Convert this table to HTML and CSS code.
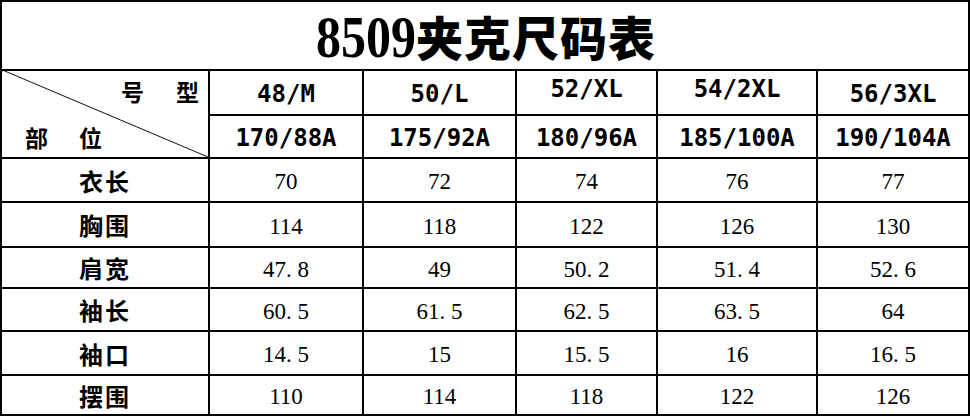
FILE: index.html
```html
<!DOCTYPE html>
<html lang="zh-CN">
<head>
<meta charset="utf-8">
<title>8509夹克尺码表</title>
<link rel="stylesheet" href="styles.css">
</head>
<body>
<div class="sheet">
  <div class="cell title"><span class="num">8509</span><span class="zh">夹克尺码表</span></div>

  <div class="cell corner">
    <svg class="diag" viewBox="0 0 100 100" preserveAspectRatio="none"><line x1="0" y1="0" x2="100" y2="100" stroke="#111" stroke-width="1" vector-effect="non-scaling-stroke"/></svg>
    <span class="mark"></span>
    <div class="corner-top"><span>号</span><span>型</span></div>
    <div class="corner-bottom"><span>部</span><span>位</span></div>
  </div>
  <div class="cell size">48/M</div>
  <div class="cell size">50/L</div>
  <div class="cell size up">52/XL</div>
  <div class="cell size up">54/2XL</div>
  <div class="cell size">56/3XL</div>
  <div class="cell size">170/88A</div>
  <div class="cell size">175/92A</div>
  <div class="cell size">180/96A</div>
  <div class="cell size">185/100A</div>
  <div class="cell size">190/104A</div>

  <div class="cell label">衣长</div>
  <div class="cell val">70</div>
  <div class="cell val">72</div>
  <div class="cell val">74</div>
  <div class="cell val">76</div>
  <div class="cell val">77</div>

  <div class="cell label">胸围</div>
  <div class="cell val">114</div>
  <div class="cell val">118</div>
  <div class="cell val">122</div>
  <div class="cell val">126</div>
  <div class="cell val">130</div>

  <div class="cell label">肩宽</div>
  <div class="cell val">47<span class="dot">.</span>8</div>
  <div class="cell val">49</div>
  <div class="cell val">50<span class="dot">.</span>2</div>
  <div class="cell val">51<span class="dot">.</span>4</div>
  <div class="cell val">52<span class="dot">.</span>6</div>

  <div class="cell label">袖长</div>
  <div class="cell val">60<span class="dot">.</span>5</div>
  <div class="cell val">61<span class="dot">.</span>5</div>
  <div class="cell val">62<span class="dot">.</span>5</div>
  <div class="cell val">63<span class="dot">.</span>5</div>
  <div class="cell val">64</div>

  <div class="cell label">袖口</div>
  <div class="cell val">14<span class="dot">.</span>5</div>
  <div class="cell val">15</div>
  <div class="cell val">15<span class="dot">.</span>5</div>
  <div class="cell val">16</div>
  <div class="cell val">16<span class="dot">.</span>5</div>

  <div class="cell label">摆围</div>
  <div class="cell val">110</div>
  <div class="cell val">114</div>
  <div class="cell val">118</div>
  <div class="cell val">122</div>
  <div class="cell val">126</div>
</div>
</body>
</html>
```

FILE: styles.css
```css
html, body {
  margin: 0;
  padding: 0;
  background: #fff;
}

.sheet {
  box-sizing: border-box;
  width: 970px;
  height: 416px;
  display: grid;
  grid-template-columns: 206px 152px 151px 139px 158px 150px;
  grid-template-rows: 67px 43px 41px 42px 43px 39px 41px 42px 38px;
  gap: 2px;
  padding: 2px;
  background: #000;
}

.cell {
  background: #fff;
  display: flex;
  align-items: center;
  justify-content: center;
  color: #000;
  white-space: nowrap;
  overflow: hidden;
}

.title {
  grid-column: 1 / -1;
  padding-left: 2px;
}

.title .num {
  display: inline-block;
  font-family: "Liberation Serif", serif;
  font-weight: 700;
  font-size: 50px;
  line-height: 1;
  transform: scale(1, 1.2);
  margin-top: 2px;
}

.title .zh {
  font-family: "Noto Sans CJK SC", sans-serif;
  font-weight: 900;
  font-size: 47px;
  line-height: 1;
  letter-spacing: 1px;
}

.corner {
  grid-row: 2 / span 2;
  position: relative;
  display: grid;
  grid-template-rows: 1fr 1fr;
  align-items: stretch;
  justify-content: stretch;
  font-family: "Noto Sans CJK SC", sans-serif;
  font-weight: 700;
  font-size: 23px;
}

.diag {
  position: absolute;
  left: -2px;
  top: -2px;
  width: calc(100% + 2px);
  height: calc(100% + 2px);
}

.mark {
  position: absolute;
  left: -2px;
  top: -2px;
  width: 0;
  height: 0;
  border-top: 5px solid #1a8a1a;
  border-right: 5px solid transparent;
}

.corner-top {
  display: flex;
  justify-content: flex-end;
  align-items: center;
  gap: 32px;
  padding-right: 9px;
  padding-bottom: 4px;
}

.corner-bottom {
  display: flex;
  justify-content: flex-start;
  align-items: center;
  gap: 31px;
  padding-left: 23px;
  padding-top: 2px;
}

.size {
  font-family: "DejaVu Sans Mono", monospace;
  font-weight: 700;
  font-size: 24px;
  padding-top: 2px;
}

.size.up {
  padding-top: 0;
  padding-bottom: 8px;
}

.label {
  font-family: "Noto Sans CJK SC", sans-serif;
  font-weight: 700;
  font-size: 24px;
  letter-spacing: 2px;
}

.val {
  font-family: "Liberation Serif", serif;
  font-size: 23px;
  padding-top: 4px;
}

.dot {
  letter-spacing: 0.25em;
}
```
